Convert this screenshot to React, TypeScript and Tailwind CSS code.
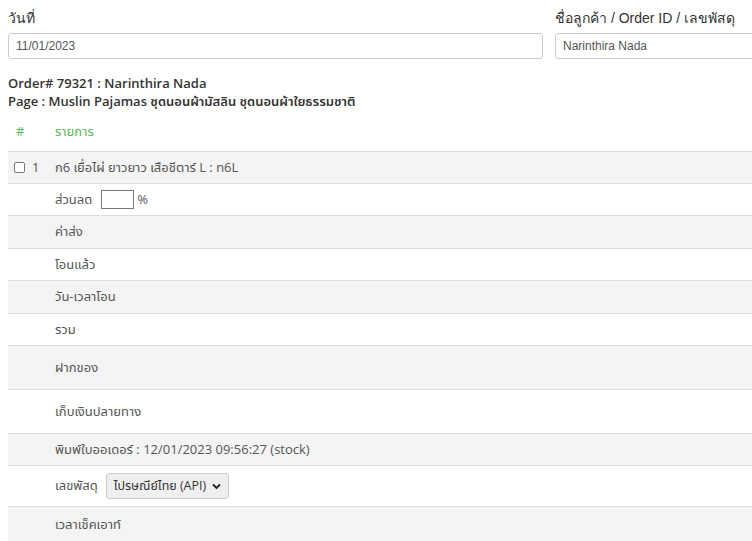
const thai = "font-['Open_Sans','Noto_Sans','Noto_Sans_Thai',Tahoma,sans-serif]";
const arial = "font-['Liberation_Sans',Arial,'Noto_Sans',sans-serif]";

type Row = {
  label: React.ReactNode;
  h: string;
  first?: React.ReactNode;
};

function Checkbox() {
  return (
    <span className="inline-block w-[11px] h-[11px] border border-[#767676] rounded-[2px] bg-white" />
  );
}

const rows: Row[] = [
  {
    first: (
      <span className="flex items-center gap-[7px]">
        <Checkbox />
        <span>1</span>
      </span>
    ),
    label: "ก6 เยื่อไผ่ ยาวยาว เสือชีตาร์ L : n6L",
    h: "h-[32px]",
  },
  {
    label: (
      <span className="flex items-center">
        ส่วนลด
        <span className="inline-block ml-[9px] w-[33px] h-[19px] border border-[#767676] bg-white" />
        <span className="ml-[3px]">%</span>
      </span>
    ),
    h: "h-[32px]",
  },
  { label: "ค่าส่ง", h: "h-[33px]" },
  { label: "โอนแล้ว", h: "h-[32px]" },
  { label: "วัน-เวลาโอน", h: "h-[33px]" },
  { label: "รวม", h: "h-[32px]" },
  { label: "ฝากของ", h: "h-[44px]" },
  { label: "เก็บเงินปลายทาง", h: "h-[44px]" },
  { label: "พิมพ์ใบออเดอร์ : 12/01/2023 09:56:27 (stock)", h: "h-[32px]" },
  {
    label: (
      <span className="flex items-center">
        เลขพัสดุ
        <span className="ml-[8px] flex items-center gap-[6px] h-[26px] px-[7px] border border-[#ccc] rounded-[3px] bg-[#efefef] text-[#333] text-[12.5px]">
          ไปรษณีย์ไทย (API)
          <svg width="9" height="7" viewBox="0 0 9 7">
            <path d="M1 1.5 L4.5 5 L8 1.5" fill="none" stroke="#222" strokeWidth="1.8" />
          </svg>
        </span>
      </span>
    ),
    h: "h-[41px]",
  },
  { label: "เวลาเช็คเอาท์", h: "h-[36px]" },
];

export default function App() {
  return (
    <div className="w-[752px] h-[541px] overflow-hidden bg-white">
      <div className="w-[1100px] pl-2 pt-[8px]">
        <div className="grid grid-cols-[535px_535px] gap-x-3">
          <div>
            <div className={`${arial} text-[14px] leading-[20px] text-[#333] mb-[5px]`}>วันที่</div>
            <div className={`${arial} h-[26px] border border-[#ccc] rounded-[3px] px-[7px] text-[12px] leading-[24px] text-[#555]`}>
              11/01/2023
            </div>
          </div>
          <div>
            <div className={`${arial} text-[14px] leading-[20px] text-[#333] mb-[5px]`}>
              ชื่อลูกค้า / Order ID / เลขพัสดุ
            </div>
            <div className={`${arial} h-[26px] border border-[#ccc] rounded-[3px] px-[7px] text-[12px] leading-[24px] text-[#555]`}>
              Narinthira Nada
            </div>
          </div>
        </div>

        <div className={`${thai} mt-[15px] font-semibold text-[13px] leading-[18px] text-[#333]`}>
          <div>Order# 79321 : Narinthira Nada</div>
          <div>Page : Muslin Pajamas ชุดนอนผ้ามัสลิน ชุดนอนผ้าใยธรรมชาติ</div>
        </div>

        <div className={`${thai} mt-[3px] text-[13px] text-[#555]`}>
          <div className="flex items-center h-[38px] text-[#5cb85c]">
            <div className="w-[47px] pl-2">#</div>
            <div>รายการ</div>
          </div>
          {rows.map((r, i) => (
            <div
              key={i}
              className={`flex items-center border-t border-[#ddd] ${r.h} ${
                i % 2 === 0 ? "bg-[#f4f4f4]" : "bg-white"
              }`}
            >
              <div className="w-[47px] pl-[6px]">{r.first}</div>
              <div>{r.label}</div>
            </div>
          ))}
        </div>
      </div>
    </div>
  );
}
